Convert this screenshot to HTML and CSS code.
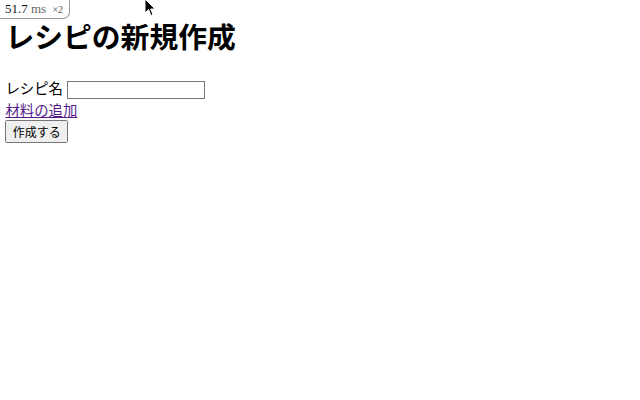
FILE: index.html
```html
<!DOCTYPE html>
<html lang="ja">
<head>
<meta charset="utf-8">
<title>レシピの新規作成</title>
<link rel="stylesheet" href="styles.css">
</head>
<body>
<main class="page">
  <h1 class="title">レシピの新規作成</h1>
  <form class="recipe-form">
    <div class="field">
      <label for="name">レシピ名</label>
      <input id="name" type="text" class="text-input">
    </div>
    <a href="#" class="add-link">材料の追加</a>
    <div class="actions">
      <button type="button" class="submit">作成する</button>
    </div>
  </form>
</main>
<div class="perf-badge"><span class="perf-num">51.7</span> <span class="perf-unit">ms</span> <span class="perf-count">×2</span></div>
<svg class="cursor" width="12" height="19" viewBox="0 0 12 19"><path d="M1 1 L1 15 L4.5 11.5 L7 17.5 L9 16.5 L6.6 11 L11 11 Z" fill="#000" stroke="#fff" stroke-width="1"/></svg>
</body>
</html>
```
FILE: styles.css
```css
body {
  margin: 0;
  font-family: "Liberation Serif", "Noto Sans CJK JP", serif;
  color: #000;
  background: #fff;
}
.page {
  zoom: 0.9;
  padding: 0 6px 8px 6px;
}
.title {
  margin: 17px 0 23px;
  font-family: "Liberation Sans", "Noto Sans CJK JP", sans-serif;
}
.recipe-form {
  margin: 0;
}
.add-link {
  color: #551a8b;
}
.text-input {
  width: 148px;
}
.submit {
  padding: 2px 7px 3px;
  font-family: "Noto Sans CJK JP", "Liberation Sans", sans-serif;
}
.perf-badge {
  position: absolute;
  top: 0;
  left: 0;
  height: 18px;
  padding: 0 6px 0 5px;
  border-right: 1px solid #999;
  border-bottom: 1px solid #999;
  border-bottom-right-radius: 7px;
  background: #fff;
  font-family: "Liberation Serif", serif;
  font-size: 13px;
  line-height: 18px;
  color: #111;
}
.perf-unit {
  color: #666;
}
.perf-count {
  font-size: 10px;
  color: #555;
  margin-left: 3px;
}
.cursor {
  position: absolute;
  top: -2px;
  left: 144px;
}
```
